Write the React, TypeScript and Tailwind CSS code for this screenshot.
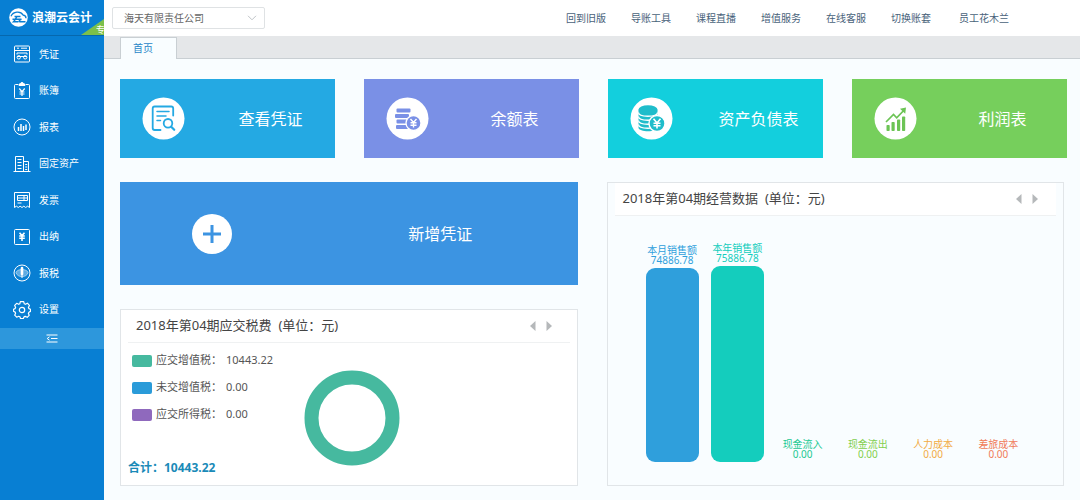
import React from "react"

const navItems = ["回到旧版", "导账工具", "课程直播", "增值服务", "在线客服", "切换账套"]

const menuItems = [
  {
    label: "凭证",
    icon: (
      <>
        <rect x="1.5" y="1" width="15" height="16" rx="1" />
        <path d="M1.5 5.5h15M4 3.2h2M8 3.2h6M4 9.5V8h10v1.5M4 11.5h10" />
        <circle cx="5.8" cy="12.3" r="1.7" />
        <circle cx="12.2" cy="12.3" r="1.7" />
      </>
    ),
  },
  {
    label: "账簿",
    icon: (
      <>
        <path d="M5 2.5H2.5a1 1 0 0 0-1 1v12a1 1 0 0 0 1 1h13a1 1 0 0 0 1-1v-12a1 1 0 0 0-1-1H13" />
        <path d="M6 3.5V2h1.5a1.5 1.5 0 0 1 3 0H12v1.5z" fill="currentColor" />
        <path d="M6.3 6.5 9 9.7l2.7-3.2M9 9.7V14M6.5 10h5M6.5 12h5" strokeWidth="1.2" />
      </>
    ),
  },
  {
    label: "报表",
    icon: (
      <>
        <circle cx="9" cy="9" r="8" />
        <path d="M5.5 9v4M8 6v7M10.5 8v5M13 6.5V12" strokeWidth="1.5" />
      </>
    ),
  },
  {
    label: "固定资产",
    icon: (
      <>
        <path d="M.5 16.5h17M2.5 16.5v-15h8v15M10.5 6.5h5v10M4.5 4.5h4M4.5 7.5h4M4.5 10.5h4M4.5 13.5h4M12.2 9.5h2M12.2 12h2M12.2 14.5h2" />
      </>
    ),
  },
  {
    label: "发票",
    icon: (
      <>
        <path d="M1.5 16.5v-15h15v15l-1.9-1.3-1.9 1.3-1.9-1.3L9 16.5l-1.9-1.3-1.8 1.3-1.9-1.3z" />
        <path d="M4.5 4.5h10v5h-10zM4.5 7h10M11 4.5v5M4.5 12h4" />
      </>
    ),
  },
  {
    label: "出纳",
    icon: (
      <>
        <rect x="1.5" y="1.5" width="15" height="15" rx="1" />
        <path d="M6.5 4.8 9 7.5l2.5-2.7M9 7.5v5.5M6.2 8h5.6M6.2 10.3h5.6" strokeWidth="1.6" />
      </>
    ),
  },
  {
    label: "报税",
    icon: (
      <>
        <circle cx="9" cy="9" r="8" />
        <path d="M3 8.5C4 4.5 14 4.5 15 8.5 14 14 4 14 3 8.5z" fill="currentColor" fillOpacity=".35" strokeOpacity=".5" />
        <path d="M9 4v6" strokeWidth="2.6" strokeLinecap="round" />
        <path d="M9 11v3" />
      </>
    ),
  },
  {
    label: "设置",
    icon: (
      <>
        <path
          d="M7.3.7h3.4l.6 2.1 1.1.5 2-1.1 2 2.2-1 2 .5 1.2 1.6.6v2.2l-1.6.8-.5 1.2.8 1.9-2 2-2-.9-1.2.5-.7 1.6H7.5l-.6-1.7-1.2-.5-2 .9-2-2 .9-2-.5-1.1-1.6-.8V8.2l1.6-.6.5-1.2-.9-2 2-2.1 2 1 1.1-.5z"
          strokeWidth="1.2"
          strokeLinejoin="round"
        />
        <circle cx="9" cy="9" r="2.7" strokeWidth="1.2" />
      </>
    ),
  },
]

const tiles = [
  {
    label: "查看凭证",
    color: "bg-[#24a9e3]",
    icon: (
      <g fill="none" stroke="#24a9e3" strokeWidth="1.8" strokeLinecap="round">
        <path d="M18.5 33h-5.8a2 2 0 0 1-2-2V11.5a2 2 0 0 1 2-2h16.5a2 2 0 0 1 2 2v7" />
        <path d="M15 14.5h12M15 19h9M15 23.5h3.5" strokeWidth="1.5" />
        <circle cx="26" cy="26.3" r="4.3" />
        <path d="m29.2 29.8 3 3" strokeWidth="2.2" />
      </g>
    ),
  },
  {
    label: "余额表",
    color: "bg-[#7a90e6]",
    icon: (
      <>
        <g fill="#7a90e6">
          <rect x="10.5" y="11.5" width="14" height="4" rx="1" />
          <rect x="9" y="17" width="14" height="4" rx="1" />
          <rect x="10.5" y="22.5" width="14" height="4" rx="1" />
          <rect x="10" y="28" width="13" height="4" rx="1" />
        </g>
        <circle cx="27.5" cy="26" r="7.5" fill="#7a90e6" stroke="#fff" strokeWidth="1.3" />
        <path d="m24.5 22 3 3.5 3-3.5M27.5 25.5v5M24.5 25.8h6M24.5 28.2h6" fill="none" stroke="#fff" strokeWidth="1.4" />
      </>
    ),
  },
  {
    label: "资产负债表",
    color: "bg-[#13cfdd]",
    icon: (
      <>
        <path d="M8.5 13v17.5c0 5 19 5 19 0V13z" fill="#1fbdcb" />
        <path d="M8.5 15.5c0 5 19 5 19 0M8.5 19.5c0 5 19 5 19 0M8.5 23.5c0 5 19 5 19 0M8.5 27.5c0 5 19 5 19 0" fill="none" stroke="#fff" strokeWidth="1.3" />
        <ellipse cx="18" cy="12.5" rx="9.5" ry="4.3" fill="#1fbdcb" />
        <circle cx="27" cy="26.5" r="8" fill="#1fbdcb" stroke="#fff" strokeWidth="1.4" />
        <path d="m23.5 21.8 3.5 4.2 3.5-4.2M27 26v5.5M23.5 26.3h7M23.5 28.8h7" fill="none" stroke="#fff" strokeWidth="1.6" />
      </>
    ),
  },
  {
    label: "利润表",
    color: "bg-[#76cf5c]",
    icon: (
      <g fill="#6cc455">
        <rect x="12.5" y="28" width="3.2" height="6" rx=".8" />
        <rect x="17.5" y="25" width="3.2" height="9" rx=".8" />
        <rect x="23" y="22.5" width="3.2" height="11.5" rx=".8" />
        <rect x="28" y="19.5" width="3.2" height="14.5" rx=".8" />
        <path d="m12 25 7.5-7.5 3.2 3.3 7-7.3" fill="none" stroke="#6cc455" strokeWidth="1.7" />
        <path d="m26 11.8 6-1.3-.8 6.2z" />
      </g>
    ),
  },
]

const taxes = [
  { label: "应交增值税：", value: "10443.22", color: "bg-[#46b99f]" },
  { label: "未交增值税：", value: "0.00", color: "bg-[#2a9bd9]" },
  { label: "应交所得税：", value: "0.00", color: "bg-[#8f69bd]" },
]

const bars = [
  { label: "本月销售额", value: "74886.78", height: 194, text: "text-[#2f9fdc]", bg: "bg-[#2f9fdc]" },
  { label: "本年销售额", value: "75886.78", height: 196, text: "text-[#14cdbd]", bg: "bg-[#14cdbd]" },
  { label: "现金流入", value: "0.00", height: 0, text: "text-[#22c993]", bg: "bg-[#22c993]" },
  { label: "现金流出", value: "0.00", height: 0, text: "text-[#82cf4e]", bg: "bg-[#82cf4e]" },
  { label: "人力成本", value: "0.00", height: 0, text: "text-[#f2ab45]", bg: "bg-[#f2ab45]" },
  { label: "差旅成本", value: "0.00", height: 0, text: "text-[#f07b58]", bg: "bg-[#f07b58]" },
]

const PanelHeader: React.FC<{ title: string }> = ({ title }) => (
  <div className="mx-[7px] flex h-[33px] items-center justify-between border-b border-[#eff1f2] bg-white pr-[17px] pl-2">
    <h2 className="text-[13px] whitespace-pre text-[#444]">{title}</h2>
    <div className="flex gap-2">
      <button type="button" aria-label="上一期" className="text-[#b5b8ba]">
        <svg width="8" height="10" viewBox="0 0 8 10" fill="currentColor">
          <path d="M6.5 0v10L1 5z" />
        </svg>
      </button>
      <button type="button" aria-label="下一期" className="text-[#b5b8ba]">
        <svg width="8" height="10" viewBox="0 0 8 10" fill="currentColor">
          <path d="M1.5 0v10L7 5z" />
        </svg>
      </button>
    </div>
  </div>
)

const Sidebar: React.FC = () => (
  <aside className="w-[104px] shrink-0 bg-[#087fd3] text-white">
    <div className="relative flex h-9 items-center gap-1 overflow-hidden border-b border-[#0668ae] pl-[9px]">
      <svg width="19" height="19" viewBox="0 0 19 19">
        <circle cx="9.5" cy="9.5" r="9.3" fill="#fff" />
        <path d="M2 8.2C4 3.5 11.5 2.5 14 7c2 .2 3 1.5 3 3.2" fill="none" stroke="#087fd3" strokeWidth="1.3" />
        <path d="M5.5 8.5h6M3.5 11.2h9c-2.5.5-3 2.6-1 2.6h5M8 8.5c-.8 1-2 4-3.5 5.3h5" fill="none" stroke="#087fd3" strokeWidth="1.4" />
      </svg>
      <h1 className="text-[12px] font-bold whitespace-nowrap">浪潮云会计</h1>
      {/* Edition ribbon */}
      <svg className="absolute right-0 bottom-0" width="23" height="16" viewBox="0 0 23 16">
        <path d="M0 16 23 0v16z" fill="#7cc04b" />
      </svg>
      <span className="absolute right-0 bottom-0 w-2 overflow-hidden text-[9px] leading-[10px] whitespace-nowrap">专</span>
    </div>

    <nav className="grid h-[292px] grid-rows-8">
      {menuItems.map((item) => (
        <a key={item.label} href="#" className="flex items-center gap-2 pl-[13px] text-[10px] hover:bg-[#2d97dc]">
          <svg width="18" height="18" viewBox="0 0 18 18" fill="none" stroke="currentColor" strokeWidth="1">
            {item.icon}
          </svg>
          <span>{item.label}</span>
        </a>
      ))}
    </nav>

    <button type="button" aria-label="收起菜单" className="flex h-[21px] w-full items-center justify-center bg-[#2d97dc]">
      <svg width="12" height="9" viewBox="0 0 12 9" fill="none" stroke="currentColor" strokeWidth="1">
        <path d="M.5 1h11M5 4.5h6.5M.5 8h11M3.5 2.8 1.2 4.5l2.3 1.7" />
      </svg>
    </button>
  </aside>
)

const Header: React.FC = () => (
  <header className="flex h-9 items-center justify-between bg-white pr-[71px] pl-2 text-[10px]">
    <div className="relative">
      <select
        aria-label="公司"
        className="h-[22px] w-[153px] appearance-none rounded-xs border border-[#dfe2e4] bg-white pl-[11px] text-[10px] text-[#666]"
      >
        <option>海天有限责任公司</option>
      </select>
      <svg className="pointer-events-none absolute top-2 right-2" width="10" height="6" viewBox="0 0 10 6" fill="none" stroke="#bfc3c7">
        <path d="m1 .8 4 4 4-4" />
      </svg>
    </div>
    <div className="flex gap-7 text-[#48627a]">
      <nav className="flex gap-[25px]">
        {navItems.map((item) => (
          <a key={item} href="#">
            {item}
          </a>
        ))}
      </nav>
      <a href="#">员工花木兰</a>
    </div>
  </header>
)

const App: React.FC = () => {
  return (
    <div className="flex min-h-screen bg-[#f9fdff] font-['Noto_Sans','Noto_Sans_CJK_SC',sans-serif]">
      <Sidebar />

      <div className="min-w-0 flex-1">
        <Header />

        {/* Tabs */}
        <div className="flex h-[23px] items-end border-b border-[#c9cfd3] bg-[#e5e7e9] pl-4">
          <a
            href="#"
            className="-mb-px flex h-[22px] w-[57px] items-center border border-b-0 border-[#c9cfd3] bg-[#f9fdff] pl-3 text-[10px] text-[#2a86c8]"
          >
            首页
          </a>
        </div>

        <main className="pt-5 pr-[13px] pb-[14px] pl-4">
          {/* Shortcuts */}
          <div className="grid grid-cols-4 gap-[29px]">
            {tiles.map((tile) => (
              <button key={tile.label} type="button" className={`flex items-center py-[18px] text-white ${tile.color}`}>
                <span className="flex w-2/5 justify-center">
                  <svg width="43" height="43" viewBox="0 0 43 43">
                    <circle cx="21.5" cy="21.5" r="21" fill="#fff" />
                    {tile.icon}
                  </svg>
                </span>
                <span className="w-3/5 text-center text-[16px]">{tile.label}</span>
              </button>
            ))}
          </div>

          <div className="mt-6 grid grid-cols-2 gap-[29px] pr-[3px]">
            <div className="flex flex-col gap-6">
              <button type="button" className="flex h-[103px] items-center bg-[#3c94e2] text-white">
                <span className="flex w-2/5 justify-center">
                  <svg width="40" height="40" viewBox="0 0 40 40">
                    <circle cx="20" cy="20" r="20" fill="#fff" />
                    <path d="M20 11v18M11 20h18" stroke="#3c94e2" strokeWidth="3" />
                  </svg>
                </span>
                <span className="w-3/5 text-center text-[16px]">新增凭证</span>
              </button>

              {/* Taxes due */}
              <section className="border border-[#e1e5e8] bg-white">
                <PanelHeader title="2018年第04期应交税费  (单位：元)" />
                <div className="flex pt-1 pb-2 pl-[7px]">
                  <div className="flex w-[176px] flex-col justify-between">
                    <dl className="pl-1 text-[11px] text-[#555]">
                      {taxes.map((tax) => (
                        <div key={tax.label} className="flex h-[27px] items-center">
                          <span className={`mr-1 h-3 w-5 rounded-xs ${tax.color}`} />
                          <dt>{tax.label}</dt>
                          <dd className="pl-1">{tax.value}</dd>
                        </div>
                      ))}
                    </dl>
                    <p className="text-[12px] font-bold text-[#1a8ab8]">合计：10443.22</p>
                  </div>
                  <svg className="mt-[23px] mb-[11px]" width="96" height="96" viewBox="0 0 96 96">
                    <circle cx="48" cy="48" r="40.5" fill="none" stroke="#46b99f" strokeWidth="14" />
                  </svg>
                </div>
              </section>
            </div>

            {/* Operating figures */}
            <section className="flex flex-col border border-[#e1e5e8]">
              <PanelHeader title="2018年第04期经营数据  (单位：元)" />
              <div className="grid flex-1 grid-cols-6 items-end px-8 pb-[23px]">
                {bars.map((bar) => (
                  <div key={bar.label} className="flex flex-col px-[6px]">
                    <div className={`mb-[3px] text-center text-[10px] leading-[10px] whitespace-nowrap ${bar.text}`}>
                      <div>{bar.label}</div>
                      <div>{bar.value}</div>
                    </div>
                    <div className={`rounded-[9px] ${bar.bg}`} style={{ height: bar.height }} />
                  </div>
                ))}
              </div>
            </section>
          </div>
        </main>
      </div>
    </div>
  )
}

export default App
